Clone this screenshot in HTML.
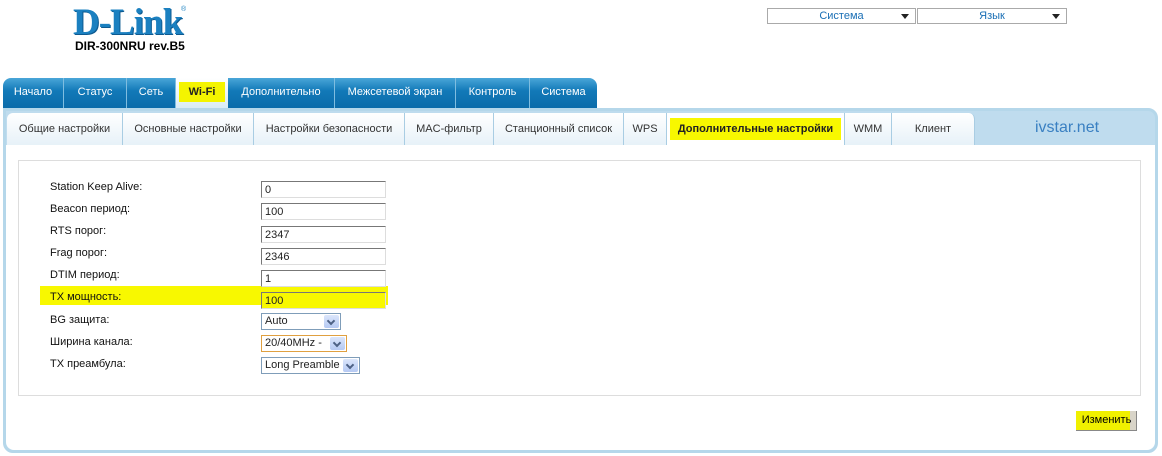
<!DOCTYPE html>
<html><head><meta charset="utf-8"><style>
*{box-sizing:border-box;margin:0;padding:0}
body{width:1162px;height:456px;background:#fff;font-family:"Liberation Sans",sans-serif;font-size:11px;color:#222;position:relative;overflow:hidden}
.abs{position:absolute}
.logo{left:73px;top:1px;font:bold 37px "Liberation Serif",serif;color:#1b80c0;letter-spacing:-1px;text-shadow:1px 1px 0 #0d5a90}
.model{left:75px;top:39px;font:bold 12px "Liberation Sans",sans-serif;color:#000}
.sel{top:8px;height:16px;border:1px solid #aaa;color:#1a6fb5;text-align:center;line-height:14px;font-size:11px}
.sel:after{content:"";position:absolute;right:6px;top:5px;border:4px solid transparent;border-top:5px solid #222}
.mt{top:78px;height:32px;background:linear-gradient(#4aa6d8,#1279b8 40%,#0a6aa8);color:#fff;line-height:28px;text-align:center;border-right:1px solid #7fbde0;font-size:11px}
.panel{left:3px;top:108px;width:1155px;height:345px;border:3px solid #b5d7ea;border-radius:0 10px 10px 10px;background:#bfdcee}
.st{top:113px;height:33px;background:linear-gradient(#fff,#e6f1f8);border-right:1px solid #a9cde3;line-height:32px;text-align:center;color:#333;font-size:11px}
.content{left:6px;top:145px;width:1149px;height:305px;background:#fff;border-radius:0 0 8px 8px}
.box{left:18px;top:160px;width:1123px;height:236px;border:1px solid #ddd}
.lbl{left:50px;font-size:11px;color:#111}
.inp{left:261px;width:125px;height:17px;border:1px solid #999;border-top-color:#777;border-left-color:#777;border-bottom-color:#ddd;border-right-color:#ddd;background:#fff;font-size:11px;padding-left:3px;line-height:16px}
.dd{height:17px;border:1px solid #7f9db9;background:#fff;font-size:11px;padding-left:3px;line-height:15px}
.dd i{position:absolute;right:1px;top:1px;width:15px;height:13px;background:linear-gradient(#dbe6fb,#b5c9f3);border-radius:2px}
.dd i:after{content:"";position:absolute;left:4px;top:3px;width:4px;height:4px;border-right:2px solid #4d6185;border-bottom:2px solid #4d6185;transform:rotate(45deg)}
</style></head><body>
<div class="abs logo">D-Link</div>
<div class="abs" style="left:181px;top:6px;font-size:7px;color:#1b80c0">®</div>
<div class="abs model">DIR-300NRU rev.B5</div>
<div class="abs sel" style="left:767px;width:149px">Система</div>
<div class="abs sel" style="left:917px;width:150px">Язык</div>

<div class="abs mt" style="left:3px;width:61px;border-radius:8px 0 0 0">Начало</div>
<div class="abs mt" style="left:64px;width:63px">Статус</div>
<div class="abs mt" style="left:127px;width:49px">Сеть</div>
<div class="abs mt" style="left:176px;width:52px;background:linear-gradient(#fff,#d7eaf5);border:none"><span style="background:#f4f400;padding:4px 10px;color:#222;font-weight:bold">Wi-Fi</span></div>
<div class="abs mt" style="left:228px;width:107px">Дополнительно</div>
<div class="abs mt" style="left:335px;width:121px">Межсетевой экран</div>
<div class="abs mt" style="left:456px;width:74px">Контроль</div>
<div class="abs mt" style="left:530px;width:67px;border-radius:0 8px 0 0;border:none">Система</div>

<div class="abs panel"></div>
<div class="abs st" style="left:7px;width:116px;border-radius:6px 0 0 0">Общие настройки</div>
<div class="abs st" style="left:123px;width:131px">Основные настройки</div>
<div class="abs st" style="left:254px;width:151px">Настройки безопасности</div>
<div class="abs st" style="left:405px;width:89px">MAC-фильтр</div>
<div class="abs st" style="left:494px;width:130px">Станционный список</div>
<div class="abs st" style="left:624px;width:43px">WPS</div>
<div class="abs st" style="left:667px;width:178px;background:#fff"><span style="background:#f8f800;padding:5px 8px;font-weight:bold;color:#222">Дополнительные настройки</span></div>
<div class="abs st" style="left:845px;width:47px">WMM</div>
<div class="abs st" style="left:892px;width:83px;border-radius:0 6px 0 0">Клиент</div>
<div class="abs" style="left:1035px;top:119px;font-size:16px;color:#3a80c2">ivstar.net</div>

<div class="abs content"></div>
<div class="abs box"></div>
<div class="abs" style="left:40px;top:286px;width:348px;height:19px;background:#f8f800"></div>

<div class="abs lbl" style="top:181px">Station Keep Alive:</div>
<div class="abs lbl" style="top:203px">Beacon период:</div>
<div class="abs lbl" style="top:225px">RTS порог:</div>
<div class="abs lbl" style="top:247px">Frag порог:</div>
<div class="abs lbl" style="top:269px">DTIM период:</div>
<div class="abs lbl" style="top:291px">TX мощность:</div>
<div class="abs lbl" style="top:314px">BG защита:</div>
<div class="abs lbl" style="top:336px">Ширина канала:</div>
<div class="abs lbl" style="top:358px">TX преамбула:</div>

<div class="abs inp" style="top:181px">0</div>
<div class="abs inp" style="top:203px">100</div>
<div class="abs inp" style="top:226px">2347</div>
<div class="abs inp" style="top:248px">2346</div>
<div class="abs inp" style="top:270px">1</div>
<div class="abs inp" style="top:292px;background:#f8f800">100</div>
<div class="abs dd" style="left:261px;top:313px;width:80px">Auto<i></i></div>
<div class="abs dd" style="left:261px;top:335px;width:86px;border-color:#e0a040">20/40MHz -<i></i></div>
<div class="abs dd" style="left:261px;top:357px;width:99px">Long Preamble<i></i></div>

<div class="abs" style="left:1076px;top:411px;width:61px;height:20px;background:#d8d4c8;border-right:1px solid #888;border-bottom:1px solid #888"></div>
<div class="abs" style="left:1076px;top:411px;width:54px;height:19px;background:#f0f000"></div>
<div class="abs" style="left:1076px;top:411px;width:61px;height:19px;line-height:19px;text-align:center;font-size:11px;color:#000">Изменить</div>
</body></html>
